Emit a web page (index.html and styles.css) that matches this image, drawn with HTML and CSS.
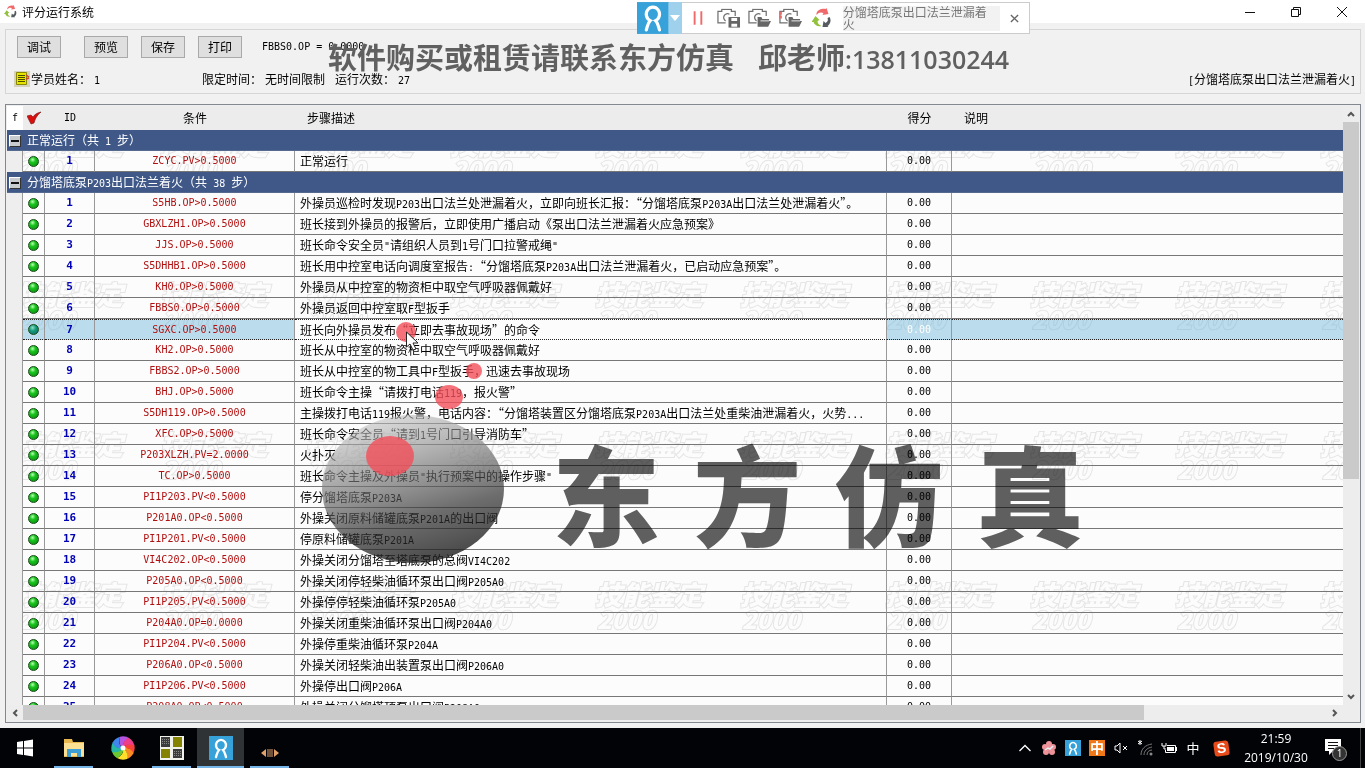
FILE: index.html
```html
<!DOCTYPE html>
<html lang="zh-CN">
<head>
<meta charset="utf-8">
<title>评分运行系统</title>
<link rel="stylesheet" href="styles.css">
</head>
<body>
<svg class="defs" width="0" height="0" aria-hidden="true">
  <symbol id="swirl" viewBox="0 0 20 20">
    <path fill="#f0696b" d="M5 5C6 2 10 0 14 1l1-1 2 6-6 1 1-2C10 4 7 4 5 7z"/>
    <path fill="#93c13d" d="M4 8l4 4-2 1c0 3 2 4 4 5-4 1-7-1-8-4l-2 0z"/>
    <path fill="#555a5e" d="M18 9c2 3 1 7-2 9l1 1-6 0 1-6 2 2c2-1 3-3 2-5z"/>
  </symbol>
  <symbol id="camera" viewBox="0 0 24 20">
    <path fill="none" stroke="#707070" stroke-width="1.3" d="M9 15H1V3h4V1h10v2h4v5M13 6a4 4 0 1 0-4 7"/>
  </symbol>
  <symbol id="folder" viewBox="0 0 24 20"><path fill="#666" d="M10 19V9h4l1 2h7v2h2l-3 6z"/><path stroke="#eee" d="M13 13h9"/></symbol>
  <symbol id="ribbon" viewBox="0 0 24 24">
    <rect width="24" height="24" fill="#36a2d9"/>
    <path fill="none" stroke="#fff" stroke-width="2.4" stroke-linecap="round" d="M7 21c1-3 1-5 3-7a5 5.300 0 1 1 4 0c2 2 2 4 3 7"/>
  </symbol>
</svg>

<header class="titlebar">
  <svg class="app-icon" viewBox="0 0 20 20"><use href="#swirl"/></svg>
  <h1>评分运行系统</h1>
  <div class="window-buttons">
    <button aria-label="最小化"><svg viewBox="0 0 12 12"><path d="M1 6.500h10"/></svg></button>
    <button aria-label="还原"><svg viewBox="0 0 12 12"><path d="M1.500 3.500h7v7h-7zM3.500 3V1.500h7v7H9"/></svg></button>
    <button aria-label="关闭"><svg viewBox="0 0 12 12"><path d="M1 1l10 10M11 1L1 11"/></svg></button>
  </div>
</header>

<section class="panel">
  <div class="actions">
    <button class="wide">调试</button><button>预览</button><button>保存</button><button>打印</button>
    <output class="mono">FBBS0.OP = 0.0000</output>
  </div>
  <div class="info">
    <svg class="note" viewBox="0 0 16 16"><rect width="16" height="16" fill="#d5d2bd"/><path fill="#e5e500" stroke="#8a8700" d="M2.500 1.500h10v12h-10z"/><path stroke="#4c4a00" d="M4 4.500h7M4 6.500h7M4 8.500h7M4 10.500h7"/><path stroke="#cf3b2c" stroke-width="1.500" d="M12 4l3 2M12 8l3-1"/></svg>
    <span class="student">学员姓名：<span class="mono value">1</span></span>
    <span class="limit">限定时间：<span class="value">无时间限制</span></span>
    <span>运行次数：<span class="mono value">27</span></span>
    <span class="task"><span class="mono">[</span>分馏塔底泵出口法兰泄漏着火<span class="mono">]</span></span>
  </div>
</section>

<main class="grid">
  <div class="view">
    <svg class="tiles" aria-hidden="true">
      <defs><pattern id="tile" x="6" y="25" width="145" height="150" patternUnits="userSpaceOnUse">
        <text class="tile-text" x="2" y="24" font-size="27">技能鉴定</text>
        <text class="tile-text" x="4" y="48" font-size="24">2000</text>
      </pattern></defs>
      <rect width="100%" height="100%" fill="url(#tile)"/>
    </svg>
    <table>
      <colgroup><col class="c-fold"><col class="c-led"><col class="c-id"><col class="c-cond"><col class="c-desc"><col class="c-score"><col></colgroup>
      <thead><tr>
        <th class="fold mono">f</th>
        <th><svg class="tick" viewBox="0 0 14 14"><path fill="#d90f0f" stroke="#7a1010" stroke-width=".6" d="M0 5l4-1 2 2c2-3 4-4 8-5-4 3-6 7-7 11l-3 1z"/></svg></th>
        <th class="mono">ID</th><th>条件</th><th class="left">步骤描述</th><th>得分</th><th class="left">说明</th>
      </tr></thead>
      <tbody>
        <tr class="group"><td colspan="7"><button class="fold-button" aria-label="折叠"></button>正常运行（共<span class="mono"> 1 </span>步）</td></tr>
        <tr><td></td><td><i class="led"></i></td><td>1</td><td>ZCYC.PV&gt;0.5000</td><td>正常运行</td><td>0.00</td><td></td></tr>
        <tr class="group"><td colspan="7"><button class="fold-button" aria-label="折叠"></button>分馏塔底泵<span class="mono">P203</span>出口法兰着火（共<span class="mono"> 38 </span>步）</td></tr>
        <tr><td></td><td><i class="led"></i></td><td>1</td><td>S5HB.OP&gt;0.5000</td><td>外操员巡检时发现<span class="mono">P203</span>出口法兰处泄漏着火，立即向班长汇报：“分馏塔底泵<span class="mono">P203A</span>出口法兰处泄漏着火”。</td><td>0.00</td><td></td></tr>
        <tr><td></td><td><i class="led"></i></td><td>2</td><td>GBXLZH1.OP&gt;0.5000</td><td>班长接到外操员的报警后，立即使用广播启动《泵出口法兰泄漏着火应急预案》</td><td>0.00</td><td></td></tr>
        <tr><td></td><td><i class="led"></i></td><td>3</td><td>JJS.OP&gt;0.5000</td><td>班长命令安全员<span class="mono">"</span>请组织人员到<span class="mono">1</span>号门口拉警戒绳<span class="mono">"</span></td><td>0.00</td><td></td></tr>
        <tr><td></td><td><i class="led"></i></td><td>4</td><td>S5DHHB1.OP&gt;0.5000</td><td>班长用中控室电话向调度室报告<span class="mono">:</span>“分馏塔底泵<span class="mono">P203A</span>出口法兰泄漏着火，已启动应急预案”。</td><td>0.00</td><td></td></tr>
        <tr><td></td><td><i class="led"></i></td><td>5</td><td>KH0.OP&gt;0.5000</td><td>外操员从中控室的物资柜中取空气呼吸器佩戴好</td><td>0.00</td><td></td></tr>
        <tr><td></td><td><i class="led"></i></td><td>6</td><td>FBBS0.OP&gt;0.5000</td><td>外操员返回中控室取<span class="mono">F</span>型扳手</td><td>0.00</td><td></td></tr>
        <tr class="selected"><td></td><td><i class="led"></i></td><td>7</td><td>SGXC.OP&gt;0.5000</td><td>班长向外操员发布“立即去事故现场”的命令</td><td>0.00</td><td></td></tr>
        <tr><td></td><td><i class="led"></i></td><td>8</td><td>KH2.OP&gt;0.5000</td><td>班长从中控室的物资柜中取空气呼吸器佩戴好</td><td>0.00</td><td></td></tr>
        <tr><td></td><td><i class="led"></i></td><td>9</td><td>FBBS2.OP&gt;0.5000</td><td>班长从中控室的物工具中<span class="mono">F</span>型扳手，迅速去事故现场</td><td>0.00</td><td></td></tr>
        <tr><td></td><td><i class="led"></i></td><td>10</td><td>BHJ.OP&gt;0.5000</td><td>班长命令主操“请拨打电话<span class="mono">119</span>，报火警”</td><td>0.00</td><td></td></tr>
        <tr><td></td><td><i class="led"></i></td><td>11</td><td>S5DH119.OP&gt;0.5000</td><td>主操拨打电话<span class="mono">119</span>报火警，电话内容：“分馏塔装置区分馏塔底泵<span class="mono">P203A</span>出口法兰处重柴油泄漏着火，火势<span class="mono">...</span></td><td>0.00</td><td></td></tr>
        <tr><td></td><td><i class="led"></i></td><td>12</td><td>XFC.OP&gt;0.5000</td><td>班长命令安全员“请到<span class="mono">1</span>号门口引导消防车”</td><td>0.00</td><td></td></tr>
        <tr><td></td><td><i class="led"></i></td><td>13</td><td>P203XLZH.PV=2.0000</td><td>火扑灭</td><td>0.00</td><td></td></tr>
        <tr><td></td><td><i class="led"></i></td><td>14</td><td>TC.OP&gt;0.5000</td><td>班长命令主操及外操员<span class="mono">"</span>执行预案中的操作步骤<span class="mono">"</span></td><td>0.00</td><td></td></tr>
        <tr><td></td><td><i class="led"></i></td><td>15</td><td>PI1P203.PV&lt;0.5000</td><td>停分馏塔底泵<span class="mono">P203A</span></td><td>0.00</td><td></td></tr>
        <tr><td></td><td><i class="led"></i></td><td>16</td><td>P201A0.OP&lt;0.5000</td><td>外操关闭原料储罐底泵<span class="mono">P201A</span>的出口阀</td><td>0.00</td><td></td></tr>
        <tr><td></td><td><i class="led"></i></td><td>17</td><td>PI1P201.PV&lt;0.5000</td><td>停原料储罐底泵<span class="mono">P201A</span></td><td>0.00</td><td></td></tr>
        <tr><td></td><td><i class="led"></i></td><td>18</td><td>VI4C202.OP&lt;0.5000</td><td>外操关闭分馏塔至塔底泵的总阀<span class="mono">VI4C202</span></td><td>0.00</td><td></td></tr>
        <tr><td></td><td><i class="led"></i></td><td>19</td><td>P205A0.OP&lt;0.5000</td><td>外操关闭停轻柴油循环泵出口阀<span class="mono">P205A0</span></td><td>0.00</td><td></td></tr>
        <tr><td></td><td><i class="led"></i></td><td>20</td><td>PI1P205.PV&lt;0.5000</td><td>外操停停轻柴油循环泵<span class="mono">P205A0</span></td><td>0.00</td><td></td></tr>
        <tr><td></td><td><i class="led"></i></td><td>21</td><td>P204A0.OP=0.0000</td><td>外操关闭重柴油循环泵出口阀<span class="mono">P204A0</span></td><td>0.00</td><td></td></tr>
        <tr><td></td><td><i class="led"></i></td><td>22</td><td>PI1P204.PV&lt;0.5000</td><td>外操停重柴油循环泵<span class="mono">P204A</span></td><td>0.00</td><td></td></tr>
        <tr><td></td><td><i class="led"></i></td><td>23</td><td>P206A0.OP&lt;0.5000</td><td>外操关闭轻柴油出装置泵出口阀<span class="mono">P206A0</span></td><td>0.00</td><td></td></tr>
        <tr><td></td><td><i class="led"></i></td><td>24</td><td>PI1P206.PV&lt;0.5000</td><td>外操停出口阀<span class="mono">P206A</span></td><td>0.00</td><td></td></tr>
        <tr><td></td><td><i class="led"></i></td><td>25</td><td>P208A0.OP&lt;0.5000</td><td>外操关闭分馏塔顶泵出口阀<span class="mono">P208A0</span></td><td>0.00</td><td></td></tr>
      </tbody>
    </table>
  </div>
  <div class="vbar">
    <svg viewBox="0 0 16 16"><path d="M5 10l3-3 3 3"/></svg>
    <div class="vtrack"><div class="vthumb"></div></div>
    <svg viewBox="0 0 16 16"><path d="M5 6l3 3 3-3"/></svg>
  </div>
  <div class="hbar">
    <svg viewBox="0 0 16 16"><path d="M10 5L7 8l3 3"/></svg>
    <div class="htrack"><div class="hthumb"></div></div>
    <svg viewBox="0 0 16 16"><path d="M6 5l3 3-3 3"/></svg>
  </div>
</main>

<nav class="taskbar">
  <button aria-label="开始"><svg width="18" height="18" viewBox="0 0 18 18"><path fill="#fff" d="M1 3l6-1v6.500H1zM8 2l9-1.500v8H8zM1 9.500h6V16l-6-1zM8 9.500h9v8L8 16z"/></svg></button>
  <button class="open" aria-label="文件资源管理器"><svg width="22" height="20" viewBox="0 0 22 20"><path fill="#e8b84e" d="M1 1h8l1 3h11v15H1z"/><path fill="#fbe093" d="M1 5h20v13H1z"/><path fill="#3e9fd6" d="M4 19v-8h14v8h-4v-4H8v4z"/></svg></button>
  <button aria-label="浏览器"><svg width="24" height="24" viewBox="-12 -12 24 24">
    <path fill="#f9423a" d="M0 0C2-4 7-5 11-4A12 12 0 0 1 10 6C8 1 4-1 0 0z"/>
    <path fill="#f98b22" transform="rotate(45)" d="M0 0C2-4 7-5 11-4A12 12 0 0 1 10 6C8 1 4-1 0 0z"/>
    <path fill="#ffdf2c" transform="rotate(90)" d="M0 0C2-4 7-5 11-4A12 12 0 0 1 10 6C8 1 4-1 0 0z"/>
    <path fill="#6cc832" transform="rotate(140)" d="M0 0C2-4 7-5 11-4A12 12 0 0 1 10 6C8 1 4-1 0 0z"/>
    <path fill="#26b8a4" transform="rotate(180)" d="M0 0C2-4 7-5 11-4A12 12 0 0 1 10 6C8 1 4-1 0 0z"/>
    <path fill="#3f86ee" transform="rotate(225)" d="M0 0C2-4 7-5 11-4A12 12 0 0 1 10 6C8 1 4-1 0 0z"/>
    <path fill="#b455e2" transform="rotate(275)" d="M0 0C2-4 7-5 11-4A12 12 0 0 1 10 6C8 1 4-1 0 0z"/>
    <path fill="#ee3d8a" transform="rotate(318)" d="M0 0C2-4 7-5 11-4A12 12 0 0 1 10 6C8 1 4-1 0 0z"/>
    <circle r="2.500" fill="#fff"/></svg></button>
  <button class="open" aria-label="仿真平台"><svg width="24" height="24" viewBox="0 0 24 24"><path fill="#f2f2ec" d="M0 0h24v24H0z"/><path fill="#3c3c3c" d="M1 1h9v10H1zM13 13h9v9h-9z"/><path fill="#858200" d="M13 1h9v10h-9zM1 13h9v9H1z"/><path stroke="#888" stroke-dasharray="1 1" d="M2 3.500h7M2 5.500h7M2 7.500h7M14 15.500h7M14 17.500h7M14 19.500h7"/></svg></button>
  <button class="open active" aria-label="录屏"><svg width="24" height="24"><use href="#ribbon"/></svg></button>
  <button class="open low" aria-label="连接"><svg width="18" height="8" viewBox="0 0 18 8"><path fill="#e0a16b" d="M5 0v8L0 4zM13 0v8l5-4zM6.500 0h1v8h-1zM8.500 0h1v8h-1zM10.500 0h1v8h-1z"/></svg></button>
  <div class="tray">
    <span><svg width="14" height="8" viewBox="0 0 14 8"><path fill="none" stroke="#fff" stroke-width="1.300" d="M1.500 7L7 1.500 12.500 7"/></svg></span>
    <span><svg width="16" height="16" viewBox="-8 -8 16 16"><g fill="#ee9399"><circle cy="-4" r="3"/><circle cx="4" cy="-1" r="3"/><circle cx="3" cy="4" r="3"/><circle cx="-3" cy="4" r="3"/><circle cx="-4" cy="-1" r="3"/><circle r="3"/></g><path fill="none" stroke="#e6f0f5" stroke-width="1.500" d="M-4 2L-1 0l2 1 3-3"/></svg></span>
    <span><svg width="16" height="16"><use href="#ribbon"/></svg></span>
    <span><b class="ime">中</b></span>
    <span><svg width="15" height="14" viewBox="0 0 15 14"><path fill="none" stroke="#fff" d="M1 5h2l3-3v10L3 9H1zM9 5l4 4M13 5L9 9"/></svg></span>
    <span><svg width="16" height="16" viewBox="0 0 16 16"><path stroke="#fff" d="M3 0v5M1 1l4 3M5 1L1 4"/><path fill="none" stroke="#777" d="M4 15C4 9 8 5 15 4M7 15c0-4 3-7 8-8M10 15c0-3 2-5 5-5"/><circle cx="14" cy="14" r="1.500" fill="#888"/></svg></span>
    <span><svg width="16" height="12" viewBox="0 0 16 12"><path fill="none" stroke="#fff" d="M6 3.500h8.500v7h-10V8M15.500 5v4M1 1v3h4V1M3 4v3h2"/><path fill="#fff" d="M6 5h7v4H6z"/></svg></span>
    <span class="lang">中</span>
    <span class="sogou"><b>S</b></span>
    <time class="clock" datetime="2019-10-30T21:59">21:59<br>2019/10/30</time>
    <button class="notices" aria-label="通知"><svg width="18" height="16" viewBox="0 0 18 16"><path fill="#fff" d="M0 0h16v12H8l-4 4v-4H0z"/><path stroke="#111" d="M3 3.500h10M3 6.500h10M3 9.500h6"/></svg><i>1</i></button>
  </div>
</nav>

<div class="recorder">
  <svg class="rec-logo" viewBox="0 0 24 24"><use href="#ribbon"/></svg>
  <button class="rec-more" aria-label="更多"></button>
  <button aria-label="暂停"><svg viewBox="0 0 24 20"><path stroke="#f06a6a" stroke-width="2" d="M9 3v14M16 3v14"/></svg></button>
  <button aria-label="保存快照"><svg viewBox="0 0 24 20"><use href="#camera"/><path fill="#666" d="M12 9h12v11H12z"/><path fill="#fff" d="M15 10h6v3h-6zM15 16h6v3h-6z"/></svg></button>
  <button aria-label="打开快照"><svg viewBox="0 0 24 20"><use href="#camera"/><use href="#folder"/></svg></button>
  <button aria-label="打开录像"><svg viewBox="0 0 24 20"><use href="#camera"/><use href="#folder"/><path stroke="#f06a6a" stroke-width="3" d="M0 5h3M0 9h3"/></svg></button>
  <button aria-label="切换"><svg viewBox="0 0 20 20"><use href="#swirl"/></svg></button>
  <p>分馏塔底泵出口法兰泄漏着火</p>
  <button class="rec-close" aria-label="关闭工具条"><svg viewBox="0 0 10 10"><path stroke="#666" stroke-width="1.500" d="M1 1l8 8M9 1L1 9"/></svg></button>
</div>

<div class="contact"><span>软件购买或租赁请联系东方仿真</span><span>邱老师<span class="phone">:13811030244</span></span></div>

<svg class="ball" viewBox="0 0 190 240" aria-hidden="true">
  <defs><linearGradient id="shade" x1=".25" y1="0" x2=".6" y2="1">
    <stop offset="0" stop-color="#c8c8c8" stop-opacity=".55"/><stop offset=".35" stop-color="#808080" stop-opacity=".65"/>
    <stop offset=".7" stop-color="#303030" stop-opacity=".7"/><stop offset="1" stop-color="#1c1c1c" stop-opacity=".8"/></linearGradient></defs>
  <ellipse cx="93" cy="169" rx="91" ry="74" fill="url(#shade)"/>
  <g fill="#f34f5a" fill-opacity=".8"><ellipse cx="70" cy="136" rx="24" ry="20"/><ellipse cx="129" cy="77" rx="14" ry="12"/><circle cx="154" cy="51" r="8"/><circle cx="86" cy="12" r="10"/></g>
  <path fill="#fff" stroke="#222" d="M86.500 12v15l3.500-3 3 6 3-1-3-6h5z"/>
</svg>
<div class="brand"><span>东</span><span>方</span><span>仿</span><span>真</span></div>
</body>
</html>
```
FILE: styles.css
```css
* { box-sizing: border-box; }
body {
  margin: 0; height: 100vh; display: flex; flex-direction: column; position: relative; overflow: hidden;
  background: #f1f1f1; color: #000; font: 12px/16px "Noto Sans CJK SC", sans-serif;
}
button { font: inherit; color: inherit; border: 0; padding: 0; background: none; }
.mono { font-family: "DejaVu Sans Mono", monospace; font-size: 10px; line-height: 1; white-space: pre; font-weight: 400; }
.defs { position: absolute; }

.titlebar { display: flex; align-items: center; height: 23px; flex: none; padding-left: 4px; background: #fff; }
.titlebar h1 { margin: 0 auto 0 5px; font-size: 12px; font-weight: 400; }
.app-icon { width: 13px; height: 13px; }
.window-buttons { display: flex; }
.window-buttons button { width: 46px; height: 20px; display: grid; place-items: center; }
.window-buttons svg { width: 12px; height: 12px; fill: none; stroke: #111; }

.panel { flex: none; margin: 6px 4px 0 5px; height: 65px; border: 1px solid #d6d6d6; padding: 6px 4px 0 8px; }
.actions { display: flex; align-items: center; gap: 13px; padding-left: 3px; }
.actions button { width: 44px; height: 22px; background: #dfdfdf; border: 1px solid #a9a9a9; }
.actions .wide { margin-right: 10px; }
.actions output { margin-left: 7px; }
.info { display: flex; align-items: center; margin-top: 13px; height: 16px; }
.note { width: 16px; height: 16px; margin-right: 1px; }
.student { width: 171px; }
.limit { width: 133px; }
.value { margin-left: 3px; }
.task { margin-left: auto; }

.grid {
  flex: 1; min-height: 0; margin: 10px 4px 5px 5px; border: 1px solid #828790; padding: 1px;
  display: grid; grid-template-columns: 1fr 16px; grid-template-rows: 1fr 16px; background: #eee;
}
.view { position: relative; overflow: hidden; min-height: 0; background: #fcfcfc; }
.tiles { position: absolute; left: 0; top: 0; width: 100%; height: 100%; }
.tile-text { font-family: "Noto Sans CJK SC", sans-serif; font-weight: 900; font-style: italic; fill: #fcfcfc; stroke: #e5e5e5; stroke-width: 2px; paint-order: stroke; }
table { position: relative; width: 100%; table-layout: fixed; border-collapse: separate; border-spacing: 0; }
.c-fold { width: 16px; } .c-led { width: 22px; } .c-id { width: 50px; } .c-cond { width: 200px; } .c-desc { width: 592px; } .c-score { width: 65px; }
th { height: 24px; padding: 0; font-weight: 400; background: #ececec; }
th.fold { background: #fff; }
th.left { text-align: left; padding-left: 12px; }
.tick { display: block; width: 14px; height: 14px; margin: auto; }
td { height: 21px; padding: 0; line-height: 20px; text-align: center; white-space: nowrap; overflow: hidden; border-bottom: 1px solid #777; border-right: 1px solid #999; }
td:first-child { background: #eee; border-bottom: 0; }
td:last-child { border-right: 0; }
td:nth-child(3) { font: bold 11px/20px "DejaVu Sans Mono", monospace; color: #0000b4; }
td:nth-child(4) { font: 10px/20px "DejaVu Sans Mono", monospace; color: #b01010; }
td:nth-child(5) { text-align: left; padding-left: 5px; }
td:nth-child(6) { font: 10px/20px "DejaVu Sans Mono", monospace; }
.group td:first-child { background: #3f5888; color: #fff; text-align: left; padding-left: 2px; border-bottom: 1px solid #56698e; }
.fold-button { width: 12px; height: 12px; margin-right: 6px; vertical-align: -1px; border: 1px solid; border-color: #fff #333 #333 #fff; background: linear-gradient(#111, #111) center / 8px 2px no-repeat #c8ccd0; }
.led { display: block; width: 11px; height: 11px; margin: auto; border-radius: 50%; border: 1px solid #164a16; background: radial-gradient(circle at 40% 30%, #b8ffb0, #18c51d 35%, #0b830f); }
.selected td { background: rgba(87, 172, 212, .4); border-bottom: 1px dotted #222; border-top: 1px dotted #222; line-height: 19px; }
.selected td:first-child { background: #eee; border: 0; border-right: 1px solid #999; }
.selected td:nth-child(5) { background: #fcfcfc; }
.selected td:nth-child(6) { color: #fff; }
.selected .led { background: radial-gradient(circle at 40% 30%, #8ee0c8, #139a7b 40%, #0b6a60); }
.vbar { display: flex; flex-direction: column; background: #ededed; }
.vbar svg, .hbar svg { width: 16px; height: 16px; flex: none; fill: none; stroke: #555; stroke-width: 2; }
.vtrack, .htrack { flex: 1; }
.vthumb { height: 63%; background: #cacaca; }
.hbar { grid-column: 1 / -1; display: flex; padding-right: 16px; background: #ededed; }
.hthumb { width: 86%; height: 15px; background: #cacaca; }

.taskbar { flex: none; height: 40px; display: flex; background: #020307; color: #fff; }
.taskbar > button { position: relative; width: 49px; display: grid; place-items: center; }
.open::after { content: ""; position: absolute; left: 5px; right: 5px; bottom: 0; height: 2px; background: #76b5e8; }
.taskbar .active { background: #2f3336; background-clip: content-box; padding: 0 1px; }
.taskbar .low { padding-top: 10px; }
.active::after { left: 1px; right: 1px; }
.tray { display: flex; align-items: center; margin-left: auto; }
.tray > span { width: 24px; display: grid; place-items: center; }
.ime { width: 16px; height: 16px; background: #f07818; font-size: 14px; line-height: 15px; text-align: center; }
.lang { font-size: 13px; }
.tray .sogou { width: 32px; }
.sogou b { width: 15px; height: 15px; border-radius: 3px; background: #e84b1b; font: bold 14px/15px "Liberation Sans", sans-serif; text-align: center; transform: rotate(-8deg); }
.clock { width: 78px; text-align: center; font: 12px/19px "Open Sans", sans-serif; }
.notices { position: relative; width: 46px; height: 40px; margin-right: 4px; padding-left: 10px; text-align: left; border-right: 1px solid #444; }
.notices i { position: absolute; left: 17px; top: 18px; width: 15px; height: 15px; border: 1px solid #999; border-radius: 50%; background: #333; text-align: center; font: 10px/13px "Open Sans", sans-serif; }

.recorder { position: absolute; left: 637px; top: 2px; display: flex; align-items: center; width: 393px; height: 32px; background: #fff; border: 1px solid #ccc; border-left: 0; }
.rec-logo { width: 32px; height: 32px; }
.recorder .rec-more { width: 13px; height: 32px; background: #9fd0ec; display: grid; place-items: center; }
.rec-more::after { content: ""; border: 5px solid transparent; border-top: 6px solid #fff; border-bottom: 0; }
.recorder button { width: 31px; height: 30px; display: grid; place-items: center; flex: none; }
.recorder button svg { width: 23px; height: 20px; }
.recorder p { margin: 0 0 0 6px; width: 158px; height: 25px; overflow: hidden; background: #f2f2f2; color: #777; font-size: 12px; line-height: 12px; padding-right: 13px; }
.recorder .rec-close { width: 29px; }
.recorder .rec-close svg { width: 9px; height: 9px; }

.contact { position: absolute; left: 328px; top: 40px; display: flex; gap: 24px; color: #606060; font-size: 29px; line-height: 32px; font-weight: 700; white-space: nowrap; pointer-events: none; }
.phone { font: 600 25px/1 "Open Sans", sans-serif; }
.ball { position: absolute; left: 320px; top: 320px; width: 190px; height: 240px; overflow: visible; pointer-events: none; }
.brand { position: absolute; left: 552px; top: 427px; width: 532px; display: flex; justify-content: space-between; color: #606060; font-size: 108px; line-height: 128px; font-weight: 900; mix-blend-mode: multiply; pointer-events: none; }
```
